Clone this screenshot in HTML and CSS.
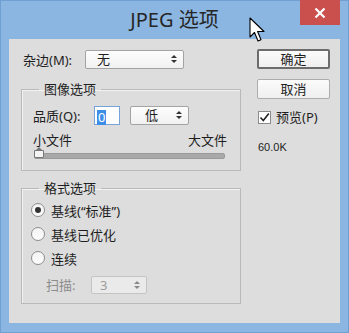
FILE: index.html
```html
<!DOCTYPE html>
<html lang="zh-CN">
<head>
    <meta charset="UTF-8">
    <title>JPEG 选项</title>
    <link rel="stylesheet" href="styles.css">
</head>
<body>
    <div class="window">
        <div class="titlebar">
            <span></span>
            <span class="title">JPEG 选项</span>
            <span class="close">
                <svg width="12" height="12" viewBox="0 0 12 12"><path d="M1.5 1.5 L10.5 10.5 M10.5 1.5 L1.5 10.5" stroke="#fff" stroke-width="2.2"/></svg>
            </span>
            <svg class="cursor" width="18" height="27" viewBox="0 0 18 27">
                <path d="M1 1 L1 20 L5.5 15.5 L9 24 L12 22.8 L8.6 14.5 L15 14.5 Z" fill="#fff" stroke="#000" stroke-width="1.1" stroke-linejoin="round"/>
            </svg>
        </div>

        <div class="dialog">
            <div class="left">
                <div class="row matte">
                    <span class="label">杂边(M):</span>
                    <span class="select wide">无<i class="arrows"></i></span>
                </div>

                <fieldset class="group image-group">
                    <legend>图像选项</legend>
                    <div class="row quality">
                        <span class="label">品质(Q):</span>
                        <span class="input"><span class="sel">0</span></span>
                        <span class="select narrow">低<i class="arrows"></i></span>
                    </div>
                    <div class="scale">
                        <span>小文件</span>
                        <span>大文件</span>
                    </div>
                    <div class="track">
                        <span class="thumb"></span>
                    </div>
                </fieldset>

                <fieldset class="group format-group">
                    <legend>格式选项</legend>
                    <div class="radio checked"><span class="dot"></span>基线(“标准”)</div>
                    <div class="radio"><span class="dot"></span>基线已优化</div>
                    <div class="radio"><span class="dot"></span>连续</div>
                    <div class="row scan">
                        <span class="label">扫描:</span>
                        <span class="select disabled">3<i class="arrows"></i></span>
                    </div>
                </fieldset>
            </div>

            <div class="right">
                <div class="btn default">确定</div>
                <div class="btn">取消</div>
                <div class="check">
                    <span class="box">
                        <svg width="11" height="11" viewBox="0 0 11 11"><path d="M1.5 5.5 L4.3 8.5 L9.8 1.5" fill="none" stroke="#222" stroke-width="1.6"/></svg>
                    </span>
                    预览(P)
                </div>
                <div class="size">60.0K</div>
            </div>
        </div>
    </div>
</body>
</html>
```

FILE: styles.css
```css
body {
    margin: 0;
    background: #fff;
    font-family: "Noto Sans", "Noto Sans CJK SC", sans-serif;
    color: #1e1e1e;
}
.window {
    width: 349px;
    height: 333px;
    box-sizing: border-box;
    background: #8cb6e2;
    border: 1px solid #6f9fd3;
    padding: 0 8px 9px;
    display: flex;
    flex-direction: column;
}
.titlebar {
    height: 38px;
    display: grid;
    grid-template-columns: 1fr auto 1fr;
    position: relative;
}
.title {
    font-size: 20px;
    line-height: 38px;
    color: #262626;
    font-family: "Noto Sans", "Noto Sans CJK SC", sans-serif;
}
.close {
    justify-self: end;
    width: 40px;
    height: 25px;
    margin-top: -1px;
    background: #c9504c;
    display: flex;
    align-items: center;
    justify-content: center;
}
.cursor {
    position: absolute;
    left: 240px;
    top: 16px;
}
.dialog {
    flex: 1;
    background: #dddddd;
    display: flex;
    font-size: 13px;
}
.left {
    width: 220px;
    padding: 11px 0 0 12px;
}
.row {
    display: flex;
    align-items: center;
}
.label {
    line-height: 18px;
}
.matte {
    padding-left: 2px;
}
.matte .label {
    width: 62px;
}
.select {
    position: relative;
    box-sizing: border-box;
    height: 19px;
    line-height: 17px;
    border: 1px solid #a3a3a3;
    border-radius: 2px;
    background: linear-gradient(#fdfdfd, #f1f1f1);
    padding-left: 11px;
}
.select.wide { width: 99px; }
.select.narrow { width: 59px; margin-left: 10px; padding-left: 14px; }
.arrows {
    position: absolute;
    right: 6px;
    top: 4px;
    width: 0;
    height: 0;
    border-left: 3px solid transparent;
    border-right: 3px solid transparent;
    border-bottom: 3px solid #333;
}
.arrows::after {
    content: "";
    position: absolute;
    left: -3px;
    top: 5px;
    border-left: 3px solid transparent;
    border-right: 3px solid transparent;
    border-top: 3px solid #333;
}
.group {
    margin: 0;
    border: 1px solid #b9b9b9;
    box-shadow: inset 1px 1px 0 #f2f2f2;
    padding: 9px 11px 11px;
}
.group legend {
    margin-left: 6px;
    padding: 0 5px;
    line-height: 16px;
}
.image-group {
    margin-top: 12px;
}
.quality .label {
    width: 61px;
}
.input {
    box-sizing: border-box;
    width: 26px;
    height: 19px;
    border: 1px solid #76a4d8;
    background: #fff;
    padding: 1px 0 0 2px;
}
.sel {
    display: inline-block;
    background: #3d8ee6;
    color: #fff;
    line-height: 15px;
    padding: 0 1px;
}
.scale {
    display: flex;
    justify-content: space-between;
    margin-top: 7px;
    line-height: 17px;
    padding-right: 2px;
}
.track {
    position: relative;
    height: 4px;
    margin: 4px 4px 0 1px;
    background: #a9a9a9;
    border: 1px solid #9a9a9a;
    border-radius: 2px;
}
.thumb {
    position: absolute;
    left: -1px;
    top: -4px;
    width: 8px;
    height: 6px;
    background: #f4f4f4;
    border: 1px solid #777;
    border-radius: 0 0 1px 1px;
}
.thumb::before {
    content: "";
    position: absolute;
    left: 0;
    top: -4px;
    border-left: 4px solid transparent;
    border-right: 4px solid transparent;
    border-bottom: 4px solid #777;
}
.format-group {
    margin-top: 9px;
    padding-top: 2px;
    padding-bottom: 9px;
}
.radio {
    display: flex;
    align-items: center;
    height: 24px;
}
.dot {
    box-sizing: border-box;
    width: 14px;
    height: 14px;
    border: 1px solid #8e8e8e;
    border-radius: 50%;
    background: linear-gradient(#f3f3f3, #fdfdfd);
    margin: 0 6px 0 -2px;
    display: flex;
    align-items: center;
    justify-content: center;
}
.checked .dot::after {
    content: "";
    width: 6px;
    height: 6px;
    border-radius: 50%;
    background: #333;
}
.scan {
    margin-top: 6px;
    padding-left: 13px;
    color: #8c8c8c;
}
.scan .label {
    width: 45px;
}
.select.disabled {
    width: 56px;
    height: 18px;
    border-color: #c4c4c4;
    background: #eaeaea;
    color: #9c9c9c;
    padding-left: 8px;
}
.select.disabled .arrows { border-bottom-color: #888; }
.select.disabled .arrows::after { border-top-color: #888; }
.right {
    margin-left: 16px;
    width: 73px;
    padding-top: 10px;
}
.btn {
    box-sizing: border-box;
    height: 20px;
    line-height: 18px;
    text-align: center;
    border: 1px solid #adadad;
    border-radius: 2px;
    background: linear-gradient(#fbfbfb, #efefef);
    margin-bottom: 10px;
}
.btn.default {
    border: 2px solid #6c6c6c;
    line-height: 16px;
}
.check {
    display: flex;
    align-items: center;
    margin-top: 7px;
    margin-left: 1px;
    line-height: 16px;
}
.box {
    box-sizing: border-box;
    width: 13px;
    height: 13px;
    border: 1px solid #8b8b8b;
    background: #fff;
    margin-right: 5px;
    display: flex;
    align-items: center;
    justify-content: center;
}
.size {
    margin-top: 16px;
    margin-left: 1px;
    font-size: 11px;
    font-family: "Liberation Sans", sans-serif;
}
```
